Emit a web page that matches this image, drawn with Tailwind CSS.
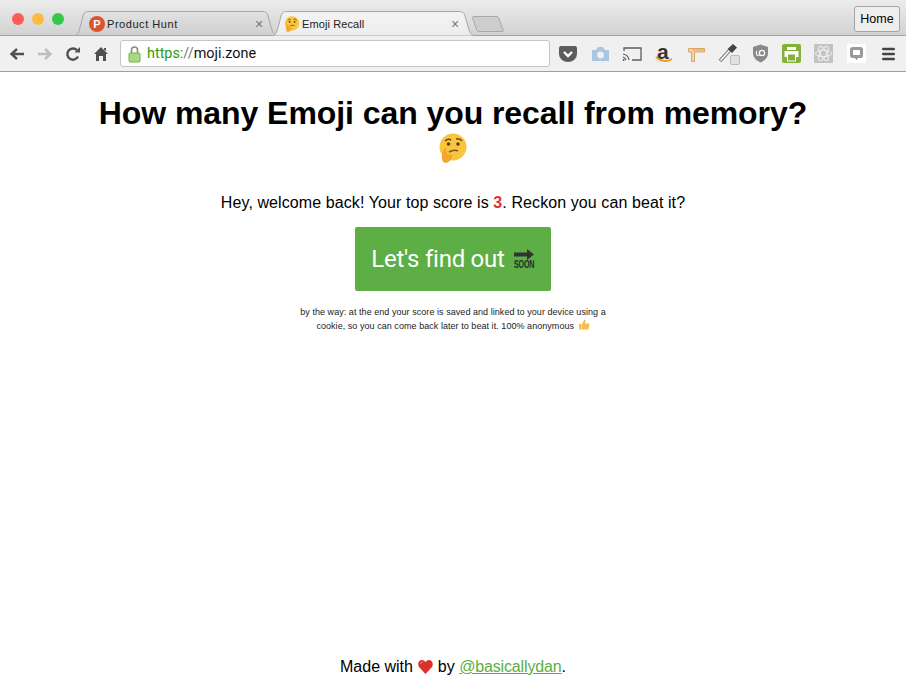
<!DOCTYPE html>
<html lang="en">
  <head>
    <meta charset="UTF-8" />
    <title>Emoji Recall</title>
    <script src="https://cdn.jsdelivr.net/npm/@tailwindcss/browser@4"></script>
  </head>
  <body class="h-[683px] w-[906px] overflow-hidden bg-white font-['Liberation_Sans',Arial,sans-serif] text-black flex flex-col">
    <!-- tab strip -->
    <div class="relative h-[36px] shrink-0 bg-gradient-to-b from-[#ececec] to-[#d2d2d2] border-b border-[#a3a3a3]">
      <div class="absolute left-[12px] top-[13px] flex gap-[8px]">
        <span class="size-[12px] rounded-full bg-[#fc5b57]"></span>
        <span class="size-[12px] rounded-full bg-[#fdbc40]"></span>
        <span class="size-[12px] rounded-full bg-[#34c84a]"></span>
      </div>
      <svg class="absolute left-0 top-0" width="510" height="36" viewBox="0 0 510 36">
        <defs>
          <linearGradient id="off" x1="0" y1="0" x2="0" y2="1"><stop offset="0" stop-color="#e2e2e2" /><stop offset="1" stop-color="#cfcfcf" /></linearGradient>
          <linearGradient id="on" x1="0" y1="0" x2="0" y2="1"><stop offset="0" stop-color="#f3f3f3" /><stop offset="1" stop-color="#ededed" /></linearGradient>
        </defs>
        <path d="M74.5 35.5 C79 35 79 30 81 24 L83 16 C84 13 85 11.5 89 11.5 L262 11.5 C266 11.5 267 13 268 16 L272 30 C273 34 275 35 278 35.5 Z" fill="url(#off)" stroke="#a6a6a6" />
        <path d="M272.5 36 C277 35 277 30 279 24 L281 16 C282 13 283 11.5 287 11.5 L459 11.5 C463 11.5 464 13 465 16 L469 30 C470 34 472 35 475 36 Z" fill="url(#on)" stroke="#a6a6a6" />
        <path d="M472.5 17.5 C472.5 16.5 473 16.5 474 16.5 L496 16.5 C498 16.5 498.5 17 499 18.5 L503 30 C503.5 31.5 503 31.5 502 31.5 L480 31.5 C478 31.5 477 31 476.5 29.5 Z" fill="#cdcdcd" stroke="#a8a8a8" />
      </svg>
      <div class="absolute left-[89px] top-[16px] size-[16px] rounded-full bg-[#da552f] text-white text-[11px] font-bold leading-[16px] text-center">P</div>
      <span class="absolute left-[107px] top-[17px] text-[11px] leading-[14px] tracking-[0.55px] text-[#222]">Product Hunt</span>
      <span class="absolute left-[255px] top-[16px] text-[14px] leading-[16px] text-[#777]">×</span>
      <svg class="absolute left-[284px] top-[16px]" width="16" height="16" viewBox="0 0 30 30">
        <circle cx="15" cy="14" r="13.5" fill="#fbc43e" />
        <path d="M7 8 Q10 5 13 7 M18 6 Q22 5 24 8" stroke="#6b4a1c" stroke-width="1.6" fill="none" />
        <circle cx="10.5" cy="11" r="1.8" fill="#5b3f1a" /><circle cx="20" cy="11" r="1.8" fill="#5b3f1a" />
        <path d="M11 19 Q16 16 20 18" stroke="#7a5520" stroke-width="1.6" fill="none" />
        <path d="M5 29 C3 24 4 20 6 16 L8 15 L9 21 L14 22 C15 25 12 29 8 30 Z" fill="#f3a52c" />
      </svg>
      <span class="absolute left-[302px] top-[17px] text-[11px] leading-[14px] tracking-[0.1px] text-[#222]">Emoji Recall</span>
      <span class="absolute left-[451px] top-[16px] text-[14px] leading-[16px] text-[#777]">×</span>
      <button class="absolute left-[854px] top-[6px] h-[26px] w-[46px] rounded-[3px] border border-[#a5a5a5] bg-[#eeeeee] text-[12.5px] text-black">Home</button>
    </div>

    <!-- toolbar -->
    <div class="h-[36px] shrink-0 bg-[#f0f0f0] border-b border-[#a0a0a0] flex items-center pl-[9px]">
      <svg width="16" height="16" viewBox="0 0 16 16" class="shrink-0"><path d="M15 8H3M8 3 L2.5 8 L8 13" stroke="#505050" stroke-width="2.4" fill="none" /></svg>
      <svg width="16" height="16" viewBox="0 0 16 16" class="shrink-0 ml-[12px]"><path d="M1 8H13M8 3 L13.5 8 L8 13" stroke="#bdbdbd" stroke-width="2.4" fill="none" /></svg>
      <svg width="16" height="16" viewBox="0 0 16 16" class="shrink-0 ml-[12px]"><path d="M13 10.5 A5.6 5.6 0 1 1 12 4.2" stroke="#505050" stroke-width="2.4" fill="none" /><path d="M9.5 6.5 H15 V1 Z" fill="#505050" /></svg>
      <svg width="16" height="16" viewBox="0 0 16 16" class="shrink-0 ml-[12px]"><path d="M8 1 L15 8 H13 V15 H10 V10 H6 V15 H3 V8 H1 Z M11 2 H13 V5 L11 3.5 Z" fill="#505050" /></svg>
      <div class="ml-[11px] h-[27px] w-[430px] shrink-0 rounded-[3px] border border-[#c4c4c4] bg-white flex items-center pl-[7px] text-[14.4px] font-['Roboto',sans-serif]">
        <svg width="13" height="18" viewBox="0 0 13 18" class="shrink-0"><path d="M3.5 8V5a3 3 0 0 1 6 0v3" stroke="#8a8a8a" stroke-width="1.6" fill="none" /><rect x="1" y="8" width="11" height="9" rx="1" fill="#a7d97e" stroke="#7cae55" /></svg>
        <span class="ml-[6px] text-[#2d9b12]">https:</span><span class="text-[#777]">//</span><span class="text-[#111]">moji.zone</span>
      </div>
      <!-- extensions -->
      <div class="ml-[2px] flex items-center shrink-0 *:w-[32px] *:flex *:justify-center *:items-center">
        <span><svg width="20" height="18" viewBox="0 0 20 18"><path d="M1 3a2 2 0 0 1 2-2h14a2 2 0 0 1 2 2v6a9 8 0 0 1-18 0Z" fill="#5d5d5d" /><path d="M6 7l4 4 4-4" stroke="#fff" stroke-width="2.4" fill="none" /></svg></span>
        <span><svg width="19" height="16" viewBox="0 0 19 16"><path d="M1 4h4l2-3h5l2 3h4v11H1Z" fill="#a9c6e2" /><circle cx="9.5" cy="9" r="3.4" fill="#f0f0f0" /></svg></span>
        <span><svg width="20" height="16" viewBox="0 0 20 16"><path d="M2 5V2h17v12h-9" stroke="#5d5d5d" stroke-width="1.3" fill="none" /><path d="M1 8a7 7 0 0 1 6 6M1 11a4 4 0 0 1 3 3" stroke="#5d5d5d" stroke-width="1.2" fill="none" /><circle cx="1.6" cy="14" r="1" fill="#5d5d5d" /></svg></span>
        <span class="relative h-[24px]">
          <span class="absolute left-[9px] top-[-1px] text-[21px] leading-[22px] font-bold text-[#333]">a</span>
          <svg class="absolute left-[7px] top-[14px]" width="18" height="8" viewBox="0 0 18 8"><path d="M1 1 Q9 8 17 3" stroke="#f09a22" stroke-width="2" fill="none" /></svg>
        </span>
        <span><svg width="17" height="16" viewBox="0 0 17 16"><path d="M0.5 2.5h16v3.5H6.5v9.5H3.5V6H0.5Z" fill="#f6d2a8" stroke="#dca468" /><path d="M5 3v2M7 3v2M9 3v2M11 3v2M13 3v2M15 3v2" stroke="#c99458" stroke-width="0.7" /></svg></span>
        <span class="relative h-[26px]">
          <svg class="absolute left-[6px] top-[2px]" width="20" height="20" viewBox="0 0 20 20"><path d="M2 18 L11 8" stroke="#777" stroke-width="3.6" /><path d="M2.5 17.5 L11 8" stroke="#f6f6f6" stroke-width="1.8" /><path d="M9.5 6 L15 1 L19 4.5 L14 10 Z" fill="#444" /></svg>
          <span class="absolute left-[18px] top-[14px] size-[10px] rounded-[2px] border border-[#bbb] bg-[#e2e2e2]"></span>
        </span>
        <span><svg width="17" height="19" viewBox="0 0 17 19"><path d="M8.5 0.5 L16 3 V9 C16 14 12 17 8.5 18.5 C5 17 1 14 1 9 V3 Z" fill="#8a8a8a" /><circle cx="10" cy="9" r="2.6" fill="none" stroke="#fff" stroke-width="1.2" /><path d="M4.5 7v3a1.5 1.5 0 0 0 3 0V7" fill="none" stroke="#fff" stroke-width="1.1" /></svg></span>
        <span><svg width="20" height="20" viewBox="0 0 20 20"><rect width="19" height="19" rx="2" fill="#83b23a" /><rect x="5" y="3" width="9" height="3" fill="#fff" /><rect x="2.5" y="7" width="14" height="6" fill="#fff" /><rect x="5.5" y="10" width="8" height="7" fill="#83b23a" stroke="#fff" /></svg></span>
        <span><svg width="20" height="20" viewBox="0 0 20 20"><rect width="19" height="19" fill="#c3c3c3" /><g fill="none" stroke="#f2f2f2"><ellipse cx="9.5" cy="9.5" rx="8" ry="3.2" /><ellipse cx="9.5" cy="9.5" rx="8" ry="3.2" transform="rotate(60 9.5 9.5)" /><ellipse cx="9.5" cy="9.5" rx="8" ry="3.2" transform="rotate(120 9.5 9.5)" /></g></svg></span>
        <span><svg width="19" height="19" viewBox="0 0 19 19"><rect width="19" height="19" fill="#fff" /><rect x="3" y="3" width="13" height="11" rx="2.5" fill="#999" /><path d="M8 14h3l-1.5 2.5Z" fill="#999" /><rect x="6" y="6" width="7" height="5" fill="#fff" /></svg></span>
        <span><svg width="13" height="14" viewBox="0 0 13 14"><path d="M1.3 2h10.4M1.3 7h10.4M1.3 12h10.4" stroke="#444" stroke-width="2.6" stroke-linecap="round" /></svg></span>
      </div>
    </div>

    <!-- page -->
    <main class="flex-1 flex flex-col items-center text-center">
      <h1 class="mt-[23px] w-[760px] text-[32px] leading-[37px] font-bold tracking-[-0.07px]">
        How many Emoji can you recall from memory?
        <svg class="mx-auto mt-[1px] block" width="30" height="30" viewBox="0 0 30 30">
          <circle cx="15" cy="14" r="13.5" fill="#fbc43e" />
          <path d="M7 8 Q10 5 13 7 M18 6 Q22 5 24 8" stroke="#6b4a1c" stroke-width="1.6" fill="none" />
          <circle cx="10.5" cy="11" r="1.8" fill="#5b3f1a" /><circle cx="20" cy="11" r="1.8" fill="#5b3f1a" />
          <path d="M11 19 Q16 16 20 18" stroke="#7a5520" stroke-width="1.6" fill="none" />
          <path d="M5 29 C3 24 4 20 6 16 L8 15 L9 21 L14 22 C15 25 12 29 8 30 Z" fill="#f3a52c" />
        </svg>
      </h1>
      <p class="mt-[29px] text-[16px] leading-[22px] tracking-[0.09px]">Hey, welcome back! Your top score is <b class="text-[#d9352b]">3</b>. Reckon you can beat it?</p>
      <button class="mt-[13px] h-[64px] w-[196px] rounded-[2px] bg-[#5cae45] flex items-center justify-center gap-[9px] text-white text-[24px] font-normal tracking-[-0.25px] font-['Roboto',sans-serif]">
        Let's find out
        <span class="w-[21px] flex flex-col items-center text-[#2b2b2b]">
          <svg width="20" height="11" viewBox="0 0 20 11"><path d="M0 3.5H13V0L20 5.5L13 11V7.5H0Z" fill="#333" /></svg>
          <span class="scale-x-[0.72] text-[10px] leading-[10px] font-bold tracking-[-0.3px] font-['Liberation_Sans',sans-serif]">SOON</span>
        </span>
      </button>
      <p class="mt-[15px] w-[320px] text-[9px] leading-[13px] tracking-[0.05px] text-[#222]">by the way: at the end your score is saved and linked to your device using a cookie, so you can come back later to beat it. 100% anonymous
        <svg class="ml-[2px] inline-block align-[-1px]" width="11" height="11" viewBox="0 0 11 11"><path d="M0 5h2.5v5.5H0ZM3 5 L5.5 0.5 L6.5 1 L6 4.5 H10.5 L9.5 10.5 H3Z" fill="#f6bd4e" /></svg>
      </p>
      <footer class="mt-auto mb-[6px] text-[16px] leading-[20px]">Made with
        <svg class="ml-[1px] inline-block align-[-2px]" width="15" height="14" viewBox="0 0 15 14"><path d="M7.5 14 L1 7 C-1 4 1 0 4 0 C5.8 0 7 1 7.5 2.3 C8 1 9.2 0 11 0 C14 0 16 4 14 7 Z" fill="#d93229" /><path d="M2.5 4 C3 2.5 4 2 5 2" stroke="#f19a90" stroke-width="1" fill="none" /></svg>
        by <a href="#" class="text-[#5cae45] underline tracking-[-0.15px]">@basicallydan</a>.</footer>
    </main>
  </body>
</html>
